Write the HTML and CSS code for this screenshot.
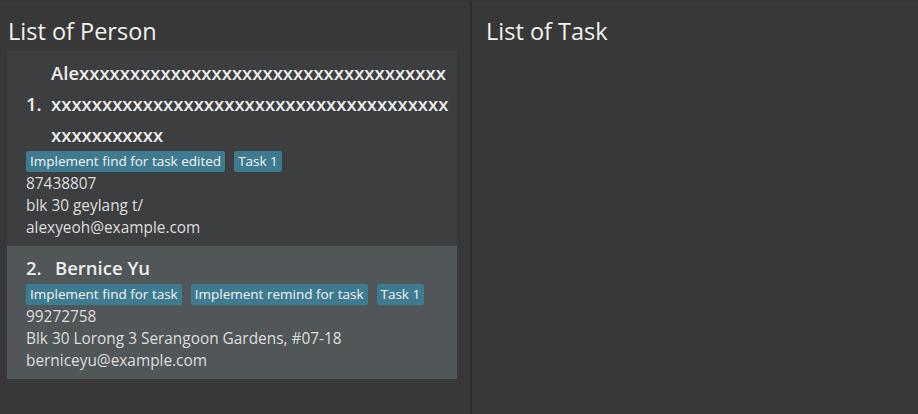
FILE: index.html
```html
<!DOCTYPE html>
<html>
<head>
<meta charset="utf-8">
<link rel="stylesheet" href="styles.css">
</head>
<body>
<div class="split">
  <section class="pane pane-left">
    <h1 class="pane-title">List of Person</h1>
    <div class="list">
      <div class="card card-odd">
        <div class="name-row">
          <span class="idx">1.</span>
          <span class="name name-long">Alexxxxxxxxxxxxxxxxxxxxxxxxxxxxxxxxxxxxxxxxxxxxxxxxxxxxxxxxxxxxxxxxxxxxxxxxxxxxxxxxxxxxxx</span>
        </div>
        <div class="tags">
          <span class="tag">Implement find for task edited</span>
          <span class="tag">Task 1</span>
        </div>
        <div class="detail">87438807</div>
        <div class="detail">blk 30 geylang t/</div>
        <div class="detail">alexyeoh@example.com</div>
      </div>
      <div class="card card-even">
        <div class="name-row">
          <span class="idx idx-spaced">2.</span>
          <span class="name">Bernice Yu</span>
        </div>
        <div class="tags">
          <span class="tag">Implement find for task</span>
          <span class="tag">Implement remind for task</span>
          <span class="tag">Task 1</span>
        </div>
        <div class="detail">99272758</div>
        <div class="detail">Blk 30 Lorong 3 Serangoon Gardens, #07-18</div>
        <div class="detail">berniceyu@example.com</div>
      </div>
    </div>
  </section>
  <div class="divider"></div>
  <section class="pane pane-right">
    <h1 class="pane-title">List of Task</h1>
  </section>
</div>
</body>
</html>
```
FILE: styles.css
```css
html, body {
  margin: 0;
  padding: 0;
  height: 100%;
  background: #383838;
  font-family: "Open Sans", "Noto Sans", sans-serif;
  color: #e8e8e8;
}

.split {
  display: flex;
  height: 414px;
  border-top: 1px solid #333333;
  box-sizing: border-box;
}

.pane {
  display: flex;
  flex-direction: column;
}

.pane-left {
  width: 470px;
  padding: 0 13px 0 7px;
  box-sizing: border-box;
}

.pane-right {
  flex: 1;
  padding: 0 13px;
}

.divider {
  width: 2px;
  background: #2d2d2d;
}

.pane-title {
  margin: 0;
  height: 50px;
  box-sizing: border-box;
  padding: 10px 0 0 1px;
  display: flex;
  align-items: center;
  font-size: 23.5px;
  font-weight: 400;
  color: #f2f2f2;
}

.list {
  display: flex;
  flex-direction: column;
}

.card {
  padding: 6px 6px 7px 19px;
  display: flex;
  flex-direction: column;
}

.card-odd {
  background: #3c3e3f;
}

.card-even {
  background: #515658;
}

.name-row {
  display: flex;
  align-items: center;
  font-size: 18.5px;
  font-weight: 600;
  color: #ededed;
  line-height: 31px;
}

.idx {
  width: 25px;
  flex: none;
}

.idx-spaced {
  width: 29px;
}

.name {
  word-break: break-all;
  min-width: 0;
}

.tags {
  display: flex;
  gap: 9px;
  margin: 1px 0 1px;
}

.tag {
  background: #3e7b91;
  color: #f4f4f4;
  font-size: 13.5px;
  line-height: 21px;
  padding: 0 4px;
  border-radius: 2px;
}

.detail {
  font-size: 15.4px;
  line-height: 22px;
  color: #dedede;
}
```
